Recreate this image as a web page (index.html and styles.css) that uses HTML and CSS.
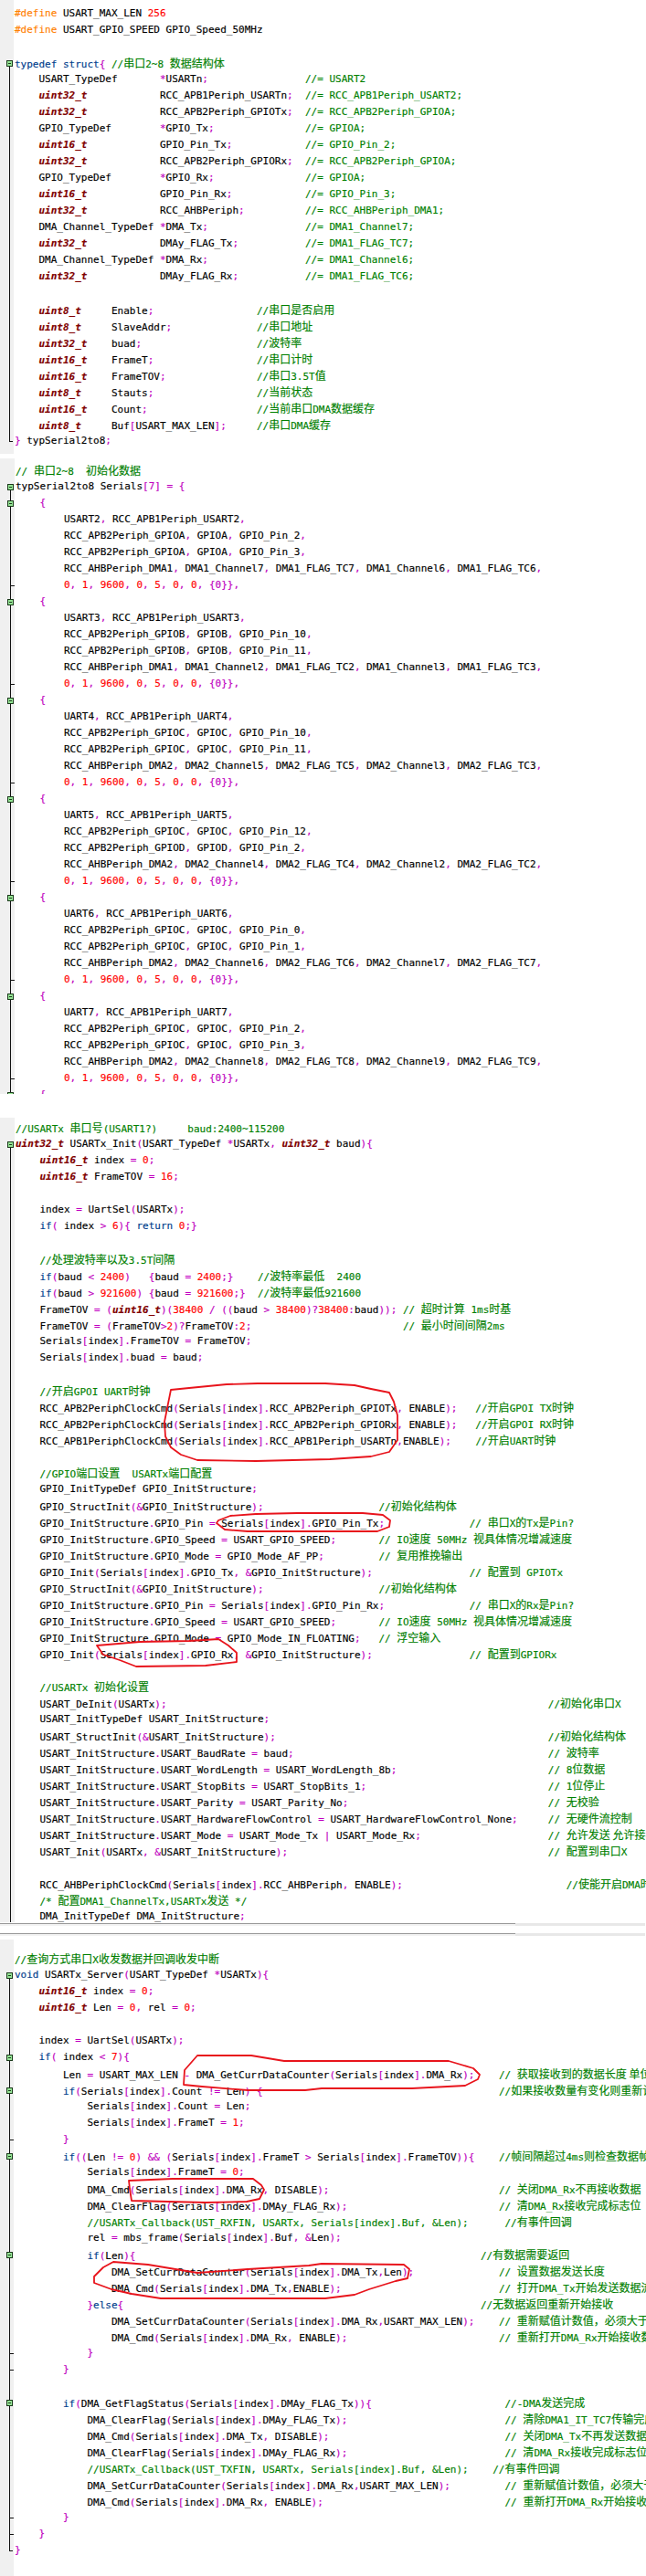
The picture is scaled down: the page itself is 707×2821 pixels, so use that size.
FILE: index.html
```html
<!DOCTYPE html>
<html lang="zh">
<head>
<meta charset="utf-8">
<title>USART DMA code</title>
<link rel="stylesheet" href="styles.css">
</head>
<body>
<main class="page">

<section class="panel one">
<div class="ln"><span class="d">#define</span> USART_MAX_LEN <span class="n">256</span></div>
<div class="ln"><span class="d">#define</span> USART_GPIO_SPEED GPIO_Speed_50MHz</div>
<div class="ln"></div>
<div class="ln m0"><span class="k">typedef struct</span><span class="p">{</span> <span class="c">//<span class="z">串口</span>2~8 <span class="z">数据结构体</span></span></div>
<div class="ln v">    USART_TypeDef       <span class="p">*</span>USARTn<span class="p">;</span>                <span class="c">//= USART2</span></div>
<div class="ln v">    <span class="t">uint32_t</span>            RCC_APB1Periph_USARTn<span class="p">;</span>  <span class="c">//= RCC_APB1Periph_USART2;</span></div>
<div class="ln v">    <span class="t">uint32_t</span>            RCC_APB2Periph_GPIOTx<span class="p">;</span>  <span class="c">//= RCC_APB2Periph_GPIOA;</span></div>
<div class="ln v">    GPIO_TypeDef        <span class="p">*</span>GPIO_Tx<span class="p">;</span>               <span class="c">//= GPIOA;</span></div>
<div class="ln v">    <span class="t">uint16_t</span>            GPIO_Pin_Tx<span class="p">;</span>            <span class="c">//= GPIO_Pin_2;</span></div>
<div class="ln v">    <span class="t">uint32_t</span>            RCC_APB2Periph_GPIORx<span class="p">;</span>  <span class="c">//= RCC_APB2Periph_GPIOA;</span></div>
<div class="ln v">    GPIO_TypeDef        <span class="p">*</span>GPIO_Rx<span class="p">;</span>               <span class="c">//= GPIOA;</span></div>
<div class="ln v">    <span class="t">uint16_t</span>            GPIO_Pin_Rx<span class="p">;</span>            <span class="c">//= GPIO_Pin_3;</span></div>
<div class="ln v">    <span class="t">uint32_t</span>            RCC_AHBPeriph<span class="p">;</span>          <span class="c">//= RCC_AHBPeriph_DMA1;</span></div>
<div class="ln v">    DMA_Channel_TypeDef <span class="p">*</span>DMA_Tx<span class="p">;</span>                <span class="c">//= DMA1_Channel7;</span></div>
<div class="ln v">    <span class="t">uint32_t</span>            DMAy_FLAG_Tx<span class="p">;</span>           <span class="c">//= DMA1_FLAG_TC7;</span></div>
<div class="ln v">    DMA_Channel_TypeDef <span class="p">*</span>DMA_Rx<span class="p">;</span>                <span class="c">//= DMA1_Channel6;</span></div>
<div class="ln v">    <span class="t">uint32_t</span>            DMAy_FLAG_Rx<span class="p">;</span>           <span class="c">//= DMA1_FLAG_TC6;</span></div>
<div class="ln v"></div>
<div class="ln v">    <span class="t">uint8_t</span>     Enable<span class="p">;</span>                 <span class="c">//<span class="z">串口是否启用</span></span></div>
<div class="ln v">    <span class="t">uint8_t</span>     SlaveAddr<span class="p">;</span>              <span class="c">//<span class="z">串口地址</span></span></div>
<div class="ln v">    <span class="t">uint32_t</span>    buad<span class="p">;</span>                   <span class="c">//<span class="z">波特率</span></span></div>
<div class="ln v">    <span class="t">uint16_t</span>    FrameT<span class="p">;</span>                 <span class="c">//<span class="z">串口计时</span></span></div>
<div class="ln v">    <span class="t">uint16_t</span>    FrameTOV<span class="p">;</span>               <span class="c">//<span class="z">串口</span>3.5T<span class="z">值</span></span></div>
<div class="ln v">    <span class="t">uint8_t</span>     Stauts<span class="p">;</span>                 <span class="c">//<span class="z">当前状态</span></span></div>
<div class="ln v">    <span class="t">uint16_t</span>    Count<span class="p">;</span>                  <span class="c">//<span class="z">当前串口</span>DMA<span class="z">数据缓存</span></span></div>
<div class="ln v">    <span class="t">uint8_t</span>     Buf<span class="p">[</span>USART_MAX_LEN<span class="p">];</span>     <span class="c">//<span class="z">串口</span>DMA<span class="z">缓存</span></span></div>
<div class="ln e"><span class="p">}</span> typSerial2to8<span class="p">;</span></div>
</section>

<section class="panel two">
<div class="ln"><span class="c">// <span class="z">串口</span>2~8  <span class="z">初始化数据</span></span></div>
<div class="ln m0">typSerial2to8 Serials<span class="p">[7]</span> <span class="p">=</span> <span class="p">{</span></div>
<div class="ln m">    <span class="p">{</span></div>
<div class="ln v">        USART2<span class="p">,</span> RCC_APB1Periph_USART2<span class="p">,</span></div>
<div class="ln v">        RCC_APB2Periph_GPIOA<span class="p">,</span> GPIOA<span class="p">,</span> GPIO_Pin_2<span class="p">,</span></div>
<div class="ln v">        RCC_APB2Periph_GPIOA<span class="p">,</span> GPIOA<span class="p">,</span> GPIO_Pin_3<span class="p">,</span></div>
<div class="ln v">        RCC_AHBPeriph_DMA1<span class="p">,</span> DMA1_Channel7<span class="p">,</span> DMA1_FLAG_TC7<span class="p">,</span> DMA1_Channel6<span class="p">,</span> DMA1_FLAG_TC6<span class="p">,</span></div>
<div class="ln x">        <span class="n">0</span><span class="p">,</span> <span class="n">1</span><span class="p">,</span> <span class="n">9600</span><span class="p">,</span> <span class="n">0</span><span class="p">,</span> <span class="n">5</span><span class="p">,</span> <span class="n">0</span><span class="p">,</span> <span class="n">0</span><span class="p">,</span> <span class="p">{0}},</span></div>
<div class="ln m">    <span class="p">{</span></div>
<div class="ln v">        USART3<span class="p">,</span> RCC_APB1Periph_USART3<span class="p">,</span></div>
<div class="ln v">        RCC_APB2Periph_GPIOB<span class="p">,</span> GPIOB<span class="p">,</span> GPIO_Pin_10<span class="p">,</span></div>
<div class="ln v">        RCC_APB2Periph_GPIOB<span class="p">,</span> GPIOB<span class="p">,</span> GPIO_Pin_11<span class="p">,</span></div>
<div class="ln v">        RCC_AHBPeriph_DMA1<span class="p">,</span> DMA1_Channel2<span class="p">,</span> DMA1_FLAG_TC2<span class="p">,</span> DMA1_Channel3<span class="p">,</span> DMA1_FLAG_TC3<span class="p">,</span></div>
<div class="ln x">        <span class="n">0</span><span class="p">,</span> <span class="n">1</span><span class="p">,</span> <span class="n">9600</span><span class="p">,</span> <span class="n">0</span><span class="p">,</span> <span class="n">5</span><span class="p">,</span> <span class="n">0</span><span class="p">,</span> <span class="n">0</span><span class="p">,</span> <span class="p">{0}},</span></div>
<div class="ln m">    <span class="p">{</span></div>
<div class="ln v">        UART4<span class="p">,</span> RCC_APB1Periph_UART4<span class="p">,</span></div>
<div class="ln v">        RCC_APB2Periph_GPIOC<span class="p">,</span> GPIOC<span class="p">,</span> GPIO_Pin_10<span class="p">,</span></div>
<div class="ln v">        RCC_APB2Periph_GPIOC<span class="p">,</span> GPIOC<span class="p">,</span> GPIO_Pin_11<span class="p">,</span></div>
<div class="ln v">        RCC_AHBPeriph_DMA2<span class="p">,</span> DMA2_Channel5<span class="p">,</span> DMA2_FLAG_TC5<span class="p">,</span> DMA2_Channel3<span class="p">,</span> DMA2_FLAG_TC3<span class="p">,</span></div>
<div class="ln x">        <span class="n">0</span><span class="p">,</span> <span class="n">1</span><span class="p">,</span> <span class="n">9600</span><span class="p">,</span> <span class="n">0</span><span class="p">,</span> <span class="n">5</span><span class="p">,</span> <span class="n">0</span><span class="p">,</span> <span class="n">0</span><span class="p">,</span> <span class="p">{0}},</span></div>
<div class="ln m">    <span class="p">{</span></div>
<div class="ln v">        UART5<span class="p">,</span> RCC_APB1Periph_UART5<span class="p">,</span></div>
<div class="ln v">        RCC_APB2Periph_GPIOC<span class="p">,</span> GPIOC<span class="p">,</span> GPIO_Pin_12<span class="p">,</span></div>
<div class="ln v">        RCC_APB2Periph_GPIOD<span class="p">,</span> GPIOD<span class="p">,</span> GPIO_Pin_2<span class="p">,</span></div>
<div class="ln v">        RCC_AHBPeriph_DMA2<span class="p">,</span> DMA2_Channel4<span class="p">,</span> DMA2_FLAG_TC4<span class="p">,</span> DMA2_Channel2<span class="p">,</span> DMA2_FLAG_TC2<span class="p">,</span></div>
<div class="ln x">        <span class="n">0</span><span class="p">,</span> <span class="n">1</span><span class="p">,</span> <span class="n">9600</span><span class="p">,</span> <span class="n">0</span><span class="p">,</span> <span class="n">5</span><span class="p">,</span> <span class="n">0</span><span class="p">,</span> <span class="n">0</span><span class="p">,</span> <span class="p">{0}},</span></div>
<div class="ln m">    <span class="p">{</span></div>
<div class="ln v">        UART6<span class="p">,</span> RCC_APB1Periph_UART6<span class="p">,</span></div>
<div class="ln v">        RCC_APB2Periph_GPIOC<span class="p">,</span> GPIOC<span class="p">,</span> GPIO_Pin_0<span class="p">,</span></div>
<div class="ln v">        RCC_APB2Periph_GPIOC<span class="p">,</span> GPIOC<span class="p">,</span> GPIO_Pin_1<span class="p">,</span></div>
<div class="ln v">        RCC_AHBPeriph_DMA2<span class="p">,</span> DMA2_Channel6<span class="p">,</span> DMA2_FLAG_TC6<span class="p">,</span> DMA2_Channel7<span class="p">,</span> DMA2_FLAG_TC7<span class="p">,</span></div>
<div class="ln x">        <span class="n">0</span><span class="p">,</span> <span class="n">1</span><span class="p">,</span> <span class="n">9600</span><span class="p">,</span> <span class="n">0</span><span class="p">,</span> <span class="n">5</span><span class="p">,</span> <span class="n">0</span><span class="p">,</span> <span class="n">0</span><span class="p">,</span> <span class="p">{0}},</span></div>
<div class="ln m">    <span class="p">{</span></div>
<div class="ln v">        UART7<span class="p">,</span> RCC_APB1Periph_UART7<span class="p">,</span></div>
<div class="ln v">        RCC_APB2Periph_GPIOC<span class="p">,</span> GPIOC<span class="p">,</span> GPIO_Pin_2<span class="p">,</span></div>
<div class="ln v">        RCC_APB2Periph_GPIOC<span class="p">,</span> GPIOC<span class="p">,</span> GPIO_Pin_3<span class="p">,</span></div>
<div class="ln v">        RCC_AHBPeriph_DMA2<span class="p">,</span> DMA2_Channel8<span class="p">,</span> DMA2_FLAG_TC8<span class="p">,</span> DMA2_Channel9<span class="p">,</span> DMA2_FLAG_TC9<span class="p">,</span></div>
<div class="ln x">        <span class="n">0</span><span class="p">,</span> <span class="n">1</span><span class="p">,</span> <span class="n">9600</span><span class="p">,</span> <span class="n">0</span><span class="p">,</span> <span class="n">5</span><span class="p">,</span> <span class="n">0</span><span class="p">,</span> <span class="n">0</span><span class="p">,</span> <span class="p">{0}},</span></div>
<div class="ln m">    <span class="p">{</span></div>
</section>

<section class="panel three">
<div class="ln"><span class="c">//USARTx <span class="z">串口号</span>(USART1?)     baud:2400~115200</span></div>
<div class="ln m0"><span class="t">uint32_t</span> USARTx_Init<span class="p">(</span>USART_TypeDef <span class="p">*</span>USARTx<span class="p">,</span> <span class="t">uint32_t</span> baud<span class="p">){</span></div>
<div class="ln v">    <span class="t">uint16_t</span> index <span class="p">=</span> <span class="n">0</span><span class="p">;</span></div>
<div class="ln v">    <span class="t">uint16_t</span> FrameTOV <span class="p">=</span> <span class="n">16</span><span class="p">;</span></div>
<div class="ln v"></div>
<div class="ln v">    index <span class="p">=</span> UartSel<span class="p">(</span>USARTx<span class="p">);</span></div>
<div class="ln v">    <span class="k">if</span><span class="p">(</span> index <span class="p">&gt;</span> <span class="n">6</span><span class="p">){</span> <span class="k">return</span> <span class="n">0</span><span class="p">;}</span></div>
<div class="ln v"></div>
<div class="ln v">    <span class="c">//<span class="z">处理波特率以及</span>3.5T<span class="z">间隔</span></span></div>
<div class="ln v">    <span class="k">if</span><span class="p">(</span>baud <span class="p">&lt;</span> <span class="n">2400</span><span class="p">)</span>   <span class="p">{</span>baud <span class="p">=</span> <span class="n">2400</span><span class="p">;}</span>    <span class="c">//<span class="z">波特率最低</span>  2400</span></div>
<div class="ln v">    <span class="k">if</span><span class="p">(</span>baud <span class="p">&gt;</span> <span class="n">921600</span><span class="p">)</span> <span class="p">{</span>baud <span class="p">=</span> <span class="n">921600</span><span class="p">;}</span>  <span class="c">//<span class="z">波特率最低</span>921600</span></div>
<div class="ln v">    FrameTOV <span class="p">=</span> <span class="p">(</span><span class="t">uint16_t</span><span class="p">)(</span><span class="n">38400</span> <span class="p">/</span> <span class="p">((</span>baud <span class="p">&gt;</span> <span class="n">38400</span><span class="p">)?</span><span class="n">38400</span><span class="p">:</span>baud<span class="p">));</span> <span class="c">// <span class="z">超时计算</span> 1ms<span class="z">时基</span></span></div>
<div class="ln v">    FrameTOV <span class="p">=</span> <span class="p">(</span>FrameTOV<span class="p">&gt;</span><span class="n">2</span><span class="p">)?</span>FrameTOV<span class="p">:</span><span class="n">2</span><span class="p">;</span>                         <span class="c">// <span class="z">最小时间间隔</span>2ms</span></div>
<div class="ln v">    Serials<span class="p">[</span>index<span class="p">].</span>FrameTOV <span class="p">=</span> FrameTOV<span class="p">;</span></div>
<div class="ln v">    Serials<span class="p">[</span>index<span class="p">].</span>buad <span class="p">=</span> baud<span class="p">;</span></div>
<div class="ln v"></div>
<div class="ln v">    <span class="c">//<span class="z">开启</span>GPOI UART<span class="z">时钟</span></span></div>
<div class="ln v">    RCC_APB2PeriphClockCmd<span class="p">(</span>Serials<span class="p">[</span>index<span class="p">].</span>RCC_APB2Periph_GPIOTx<span class="p">,</span> ENABLE<span class="p">);</span>   <span class="c">//<span class="z">开启</span>GPOI TX<span class="z">时钟</span></span></div>
<div class="ln v">    RCC_APB2PeriphClockCmd<span class="p">(</span>Serials<span class="p">[</span>index<span class="p">].</span>RCC_APB2Periph_GPIORx<span class="p">,</span> ENABLE<span class="p">);</span>   <span class="c">//<span class="z">开启</span>GPOI RX<span class="z">时钟</span></span></div>
<div class="ln v">    RCC_APB1PeriphClockCmd<span class="p">(</span>Serials<span class="p">[</span>index<span class="p">].</span>RCC_APB1Periph_USARTn<span class="p">,</span>ENABLE<span class="p">);</span>    <span class="c">//<span class="z">开启</span>UART<span class="z">时钟</span></span></div>
<div class="ln v"></div>
<div class="ln v">    <span class="c">//GPIO<span class="z">端口设置</span>  USARTx<span class="z">端口配置</span></span></div>
<div class="ln v">    GPIO_InitTypeDef GPIO_InitStructure<span class="p">;</span></div>
<div class="ln v">    GPIO_StructInit<span class="p">(&amp;</span>GPIO_InitStructure<span class="p">);</span>                   <span class="c">//<span class="z">初始化结构体</span></span></div>
<div class="ln v">    GPIO_InitStructure<span class="p">.</span>GPIO_Pin <span class="p">=</span> Serials<span class="p">[</span>index<span class="p">].</span>GPIO_Pin_Tx<span class="p">;</span>              <span class="c">// <span class="z">串口</span>X<span class="z">的</span>Tx<span class="z">是</span>Pin?</span></div>
<div class="ln v">    GPIO_InitStructure<span class="p">.</span>GPIO_Speed <span class="p">=</span> USART_GPIO_SPEED<span class="p">;</span>       <span class="c">// IO<span class="z">速度</span> 50MHz <span class="z">视具体情况增减速度</span></span></div>
<div class="ln v">    GPIO_InitStructure<span class="p">.</span>GPIO_Mode <span class="p">=</span> GPIO_Mode_AF_PP<span class="p">;</span>         <span class="c">// <span class="z">复用推挽输出</span></span></div>
<div class="ln v">    GPIO_Init<span class="p">(</span>Serials<span class="p">[</span>index<span class="p">].</span>GPIO_Tx<span class="p">,</span> <span class="p">&amp;</span>GPIO_InitStructure<span class="p">);</span>                <span class="c">// <span class="z">配置到</span> GPIOTx</span></div>
<div class="ln v">    GPIO_StructInit<span class="p">(&amp;</span>GPIO_InitStructure<span class="p">);</span>                   <span class="c">//<span class="z">初始化结构体</span></span></div>
<div class="ln v">    GPIO_InitStructure<span class="p">.</span>GPIO_Pin <span class="p">=</span> Serials<span class="p">[</span>index<span class="p">].</span>GPIO_Pin_Rx<span class="p">;</span>              <span class="c">// <span class="z">串口</span>X<span class="z">的</span>Rx<span class="z">是</span>Pin?</span></div>
<div class="ln v">    GPIO_InitStructure<span class="p">.</span>GPIO_Speed <span class="p">=</span> USART_GPIO_SPEED<span class="p">;</span>       <span class="c">// IO<span class="z">速度</span> 50MHz <span class="z">视具体情况增减速度</span></span></div>
<div class="ln v">    GPIO_InitStructure<span class="p">.</span>GPIO_Mode <span class="p">=</span> GPIO_Mode_IN_FLOATING<span class="p">;</span>   <span class="c">// <span class="z">浮空输入</span></span></div>
<div class="ln v">    GPIO_Init<span class="p">(</span>Serials<span class="p">[</span>index<span class="p">].</span>GPIO_Rx<span class="p">,</span> <span class="p">&amp;</span>GPIO_InitStructure<span class="p">);</span>                <span class="c">// <span class="z">配置到</span>GPIORx</span></div>
<div class="ln v"></div>
<div class="ln v">    <span class="c">//USARTx <span class="z">初始化设置</span></span></div>
<div class="ln v">    USART_DeInit<span class="p">(</span>USARTx<span class="p">);</span>                                                               <span class="c">//<span class="z">初始化串口</span>X</span></div>
<div class="ln v">    USART_InitTypeDef USART_InitStructure<span class="p">;</span></div>
<div class="ln v">    USART_StructInit<span class="p">(&amp;</span>USART_InitStructure<span class="p">);</span>                                             <span class="c">//<span class="z">初始化结构体</span></span></div>
<div class="ln v">    USART_InitStructure<span class="p">.</span>USART_BaudRate <span class="p">=</span> baud<span class="p">;</span>                                          <span class="c">// <span class="z">波特率</span></span></div>
<div class="ln v">    USART_InitStructure<span class="p">.</span>USART_WordLength <span class="p">=</span> USART_WordLength_8b<span class="p">;</span>                         <span class="c">// 8<span class="z">位数据</span></span></div>
<div class="ln v">    USART_InitStructure<span class="p">.</span>USART_StopBits <span class="p">=</span> USART_StopBits_1<span class="p">;</span>                              <span class="c">// 1<span class="z">位停止</span></span></div>
<div class="ln v">    USART_InitStructure<span class="p">.</span>USART_Parity <span class="p">=</span> USART_Parity_No<span class="p">;</span>                                 <span class="c">// <span class="z">无校验</span></span></div>
<div class="ln v">    USART_InitStructure<span class="p">.</span>USART_HardwareFlowControl <span class="p">=</span> USART_HardwareFlowControl_None<span class="p">;</span>     <span class="c">// <span class="z">无硬件流控制</span></span></div>
<div class="ln v">    USART_InitStructure<span class="p">.</span>USART_Mode <span class="p">=</span> USART_Mode_Tx <span class="p">|</span> USART_Mode_Rx<span class="p">;</span>                     <span class="c">// <span class="z">允许发送 允许接收</span></span></div>
<div class="ln v">    USART_Init<span class="p">(</span>USARTx<span class="p">,</span> <span class="p">&amp;</span>USART_InitStructure<span class="p">);</span>                                           <span class="c">// <span class="z">配置到串口</span>X</span></div>
<div class="ln v"></div>
<div class="ln v">    RCC_AHBPeriphClockCmd<span class="p">(</span>Serials<span class="p">[</span>index<span class="p">].</span>RCC_AHBPeriph<span class="p">,</span> ENABLE<span class="p">);</span>                           <span class="c">//<span class="z">使能开启</span>DMA<span class="z">时钟</span></span></div>
<div class="ln v">    <span class="c">/* <span class="z">配置</span>DMA1_ChannelTx,USARTx<span class="z">发送</span> */</span></div>
<div class="ln v">    DMA_InitTypeDef DMA_InitStructure<span class="p">;</span></div>
</section>

<div class="sep first"><span class="sep-dark"></span><span class="sep-light"></span></div>
<div class="sep second"><span class="sep-dark"></span><span class="sep-light"></span></div>

<section class="panel four">
<div class="ln"><span class="c">//<span class="z">查询方式串口</span>X<span class="z">收发数据并回调收发中断</span></span></div>
<div class="ln m0"><span class="k">void</span> USARTx_Server<span class="p">(</span>USART_TypeDef <span class="p">*</span>USARTx<span class="p">){</span></div>
<div class="ln v">    <span class="t">uint16_t</span> index <span class="p">=</span> <span class="n">0</span><span class="p">;</span></div>
<div class="ln v">    <span class="t">uint16_t</span> Len <span class="p">=</span> <span class="n">0</span><span class="p">,</span> rel <span class="p">=</span> <span class="n">0</span><span class="p">;</span></div>
<div class="ln v"></div>
<div class="ln v">    index <span class="p">=</span> UartSel<span class="p">(</span>USARTx<span class="p">);</span></div>
<div class="ln m">    <span class="k">if</span><span class="p">(</span> index <span class="p">&lt;</span> <span class="n">7</span><span class="p">){</span></div>
<div class="ln v">        Len <span class="p">=</span> USART_MAX_LEN <span class="p">-</span> DMA_GetCurrDataCounter<span class="p">(</span>Serials<span class="p">[</span>index<span class="p">].</span>DMA_Rx<span class="p">);</span>    <span class="c">// <span class="z">获取接收到的数据长度 单位为字节</span></span></div>
<div class="ln m">        <span class="k">if</span><span class="p">(</span>Serials<span class="p">[</span>index<span class="p">].</span>Count <span class="p">!=</span> Len<span class="p">)</span> <span class="p">{</span>                                       <span class="c">//<span class="z">如果接收数量有变化则重新计时</span></span></div>
<div class="ln v">            Serials<span class="p">[</span>index<span class="p">].</span>Count <span class="p">=</span> Len<span class="p">;</span></div>
<div class="ln v">            Serials<span class="p">[</span>index<span class="p">].</span>FrameT <span class="p">=</span> <span class="n">1</span><span class="p">;</span></div>
<div class="ln x">        <span class="p">}</span></div>
<div class="ln m">        <span class="k">if</span><span class="p">((</span>Len <span class="p">!=</span> <span class="n">0</span><span class="p">)</span> <span class="p">&amp;&amp;</span> <span class="p">(</span>Serials<span class="p">[</span>index<span class="p">].</span>FrameT <span class="p">&gt;</span> Serials<span class="p">[</span>index<span class="p">].</span>FrameTOV<span class="p">)){</span>    <span class="c">//<span class="z">帧间隔超过</span>4ms<span class="z">则检查数据帧</span></span></div>
<div class="ln v">            Serials<span class="p">[</span>index<span class="p">].</span>FrameT <span class="p">=</span> <span class="n">0</span><span class="p">;</span></div>
<div class="ln v">            DMA_Cmd<span class="p">(</span>Serials<span class="p">[</span>index<span class="p">].</span>DMA_Rx<span class="p">,</span> DISABLE<span class="p">);</span>                            <span class="c">// <span class="z">关闭</span>DMA_Rx<span class="z">不再接收数据</span></span></div>
<div class="ln v">            DMA_ClearFlag<span class="p">(</span>Serials<span class="p">[</span>index<span class="p">].</span>DMAy_FLAG_Rx<span class="p">);</span>                         <span class="c">// <span class="z">清</span>DMA_Rx<span class="z">接收完成标志位</span></span></div>
<div class="ln v">            <span class="c">//USARTx_Callback(UST_RXFIN, USARTx, Serials[index].Buf, &amp;Len);      //<span class="z">有事件回调</span></span></div>
<div class="ln v">            rel <span class="p">=</span> mbs_frame<span class="p">(</span>Serials<span class="p">[</span>index<span class="p">].</span>Buf<span class="p">,</span> <span class="p">&amp;</span>Len<span class="p">);</span></div>
<div class="ln m">            <span class="k">if</span><span class="p">(</span>Len<span class="p">){</span>                                                         <span class="c">//<span class="z">有数据需要返回</span></span></div>
<div class="ln v">                DMA_SetCurrDataCounter<span class="p">(</span>Serials<span class="p">[</span>index<span class="p">].</span>DMA_Tx<span class="p">,</span>Len<span class="p">);</span>              <span class="c">// <span class="z">设置数据发送长度</span></span></div>
<div class="ln v">                DMA_Cmd<span class="p">(</span>Serials<span class="p">[</span>index<span class="p">].</span>DMA_Tx<span class="p">,</span>ENABLE<span class="p">);</span>                          <span class="c">// <span class="z">打开</span>DMA_Tx<span class="z">开始发送数据流</span></span></div>
<div class="ln v">            <span class="p">}</span><span class="k">else</span><span class="p">{</span>                                                           <span class="c">//<span class="z">无数据返回重新开始接收</span></span></div>
<div class="ln v">                DMA_SetCurrDataCounter<span class="p">(</span>Serials<span class="p">[</span>index<span class="p">].</span>DMA_Rx<span class="p">,</span>USART_MAX_LEN<span class="p">);</span>    <span class="c">// <span class="z">重新赋值计数值，必须大于</span></span></div>
<div class="ln v">                DMA_Cmd<span class="p">(</span>Serials<span class="p">[</span>index<span class="p">].</span>DMA_Rx<span class="p">,</span> ENABLE<span class="p">);</span>                         <span class="c">// <span class="z">重新打开</span>DMA_Rx<span class="z">开始接收数据</span></span></div>
<div class="ln x">            <span class="p">}</span></div>
<div class="ln x">        <span class="p">}</span></div>
<div class="ln v"></div>
<div class="ln m">        <span class="k">if</span><span class="p">(</span>DMA_GetFlagStatus<span class="p">(</span>Serials<span class="p">[</span>index<span class="p">].</span>DMAy_FLAG_Tx<span class="p">)){</span>                      <span class="c">//-DMA<span class="z">发送完成</span></span></div>
<div class="ln v">            DMA_ClearFlag<span class="p">(</span>Serials<span class="p">[</span>index<span class="p">].</span>DMAy_FLAG_Tx<span class="p">);</span>                          <span class="c">// <span class="z">清除</span>DMA1_IT_TC7<span class="z">传输完成标志位</span></span></div>
<div class="ln v">            DMA_Cmd<span class="p">(</span>Serials<span class="p">[</span>index<span class="p">].</span>DMA_Tx<span class="p">,</span> DISABLE<span class="p">);</span>                             <span class="c">// <span class="z">关闭</span>DMA_Tx<span class="z">不再发送数据</span></span></div>
<div class="ln v">            DMA_ClearFlag<span class="p">(</span>Serials<span class="p">[</span>index<span class="p">].</span>DMAy_FLAG_Rx<span class="p">);</span>                          <span class="c">// <span class="z">清</span>DMA_Rx<span class="z">接收完成标志位</span></span></div>
<div class="ln v">            <span class="c">//USARTx_Callback(UST_TXFIN, USARTx, Serials[index].Buf, &amp;Len);    //<span class="z">有事件回调</span></span></div>
<div class="ln v">            DMA_SetCurrDataCounter<span class="p">(</span>Serials<span class="p">[</span>index<span class="p">].</span>DMA_Rx<span class="p">,</span>USART_MAX_LEN<span class="p">);</span>         <span class="c">// <span class="z">重新赋值计数值，必须大于</span></span></div>
<div class="ln v">            DMA_Cmd<span class="p">(</span>Serials<span class="p">[</span>index<span class="p">].</span>DMA_Rx<span class="p">,</span> ENABLE<span class="p">);</span>                              <span class="c">// <span class="z">重新打开</span>DMA_Rx<span class="z">开始接收数据</span></span></div>
<div class="ln x">        <span class="p">}</span></div>
<div class="ln x">    <span class="p">}</span></div>
<div class="ln e"><span class="p">}</span></div>
</section>

<svg class="ink" viewBox="0 0 707 2821" aria-hidden="true">
<path d="M187 1522 207 1520 248 1516 282 1515 356 1515 388 1517 406 1521 426 1525 431 1535 435 1550 435 1577 426 1590 406 1595 361 1598 280 1600 216 1599 198 1593 187 1585 181 1573 180 1557 184 1537Z"/>
<path d="M237 1668 239 1665 252 1660 280 1658 325 1657 397 1657 419 1659 427 1665 426 1672 413 1677 316 1677 271 1677 246 1675Z"/>
<path d="M106 1802 153 1798 207 1797 239 1795 250 1802 259 1810 259 1820 225 1824 149 1825 131 1818 113 1812Z"/>
<path d="M216 2251 275 2251 311 2257 491 2257 518 2265 525 2272 523 2277 509 2284 451 2287 352 2287 334 2289 271 2289 221 2285 201 2283 202 2267Z"/>
<path d="M141 2388 189 2386 277 2386 286 2393 289 2398 284 2408 270 2411 225 2412 144 2410 142 2397Z"/>
<path d="M124 2477 162 2480 180 2483 216 2489 271 2485 338 2481 352 2479 442 2480 448 2485 446 2495 433 2498 404 2507 388 2513 356 2517 176 2517 144 2512 122 2507 103 2500 103 2493 113 2483Z"/>
</svg>

</main>
</body>
</html>
```

FILE: styles.css
```css
html, body {
  margin: 0;
  padding: 0;
  background: #fff;
}

.page {
  position: relative;
  width: 707px;
  height: 2821px;
  overflow: hidden;
  font-family: "DejaVu Sans Mono", "Noto Sans CJK SC", monospace;
  font-size: 11px;
  line-height: 18px;
  color: #000;
  -webkit-text-stroke: 0.15px currentColor;
}

.panel {
  --g: 15px;
  --mx: 7px;
  --ink: #111;
  overflow: hidden;
  background: linear-gradient(90deg, #f0f0f0 var(--g), #fff var(--g));
}

.one { height: 491px; padding-top: 6px; }
.two { --g: 16px; --mx: 8px; height: 692px; margin-top: 5px; padding-top: 4px; }
.three { --g: 16px; --mx: 8px; height: 879px; margin-top: 26px; padding-top: 2px; }
.four { height: 686px; margin-top: 4px; padding-top: 12px; }

.ln {
  height: 18px;
  white-space: pre;
}

.ln::before {
  content: "";
  display: inline-block;
  width: var(--g);
  height: 18px;
  margin-right: 1px;
  vertical-align: top;
  background-repeat: no-repeat;
}

.v::before {
  background-image: linear-gradient(var(--ink), var(--ink));
  background-position: calc(var(--mx) + 3px) 0;
  background-size: 1px 100%;
}

.x::before {
  background-image: linear-gradient(var(--ink), var(--ink)), linear-gradient(var(--ink), var(--ink));
  background-position: calc(var(--mx) + 3px) 9px, calc(var(--mx) + 3px) 0;
  background-size: 5px 1px, 1px 100%;
}

.e::before {
  background-image: linear-gradient(var(--ink), var(--ink)), linear-gradient(var(--ink), var(--ink));
  background-position: calc(var(--mx) + 3px) 9px, calc(var(--mx) + 3px) 0;
  background-size: 4px 1px, 1px 10px;
}

.m::before,
.m0::before {
  background-image:
    linear-gradient(#1c3a1c, #1c3a1c),
    linear-gradient(#96e696, #96e696),
    linear-gradient(#1c3a1c, #1c3a1c),
    linear-gradient(var(--ink), var(--ink));
  background-position:
    calc(var(--mx) + 2px) 9px,
    calc(var(--mx) + 1px) 7px,
    var(--mx) 6px,
    calc(var(--mx) + 3px) 0;
  background-size: 3px 1px, 5px 5px, 7px 7px, 1px 100%;
}

.m0::before {
  background-position:
    calc(var(--mx) + 2px) 9px,
    calc(var(--mx) + 1px) 7px,
    var(--mx) 6px,
    calc(var(--mx) + 3px) 12px;
}

.c, .c .z { color: #008000; }
.d { color: #ff8000; }
.k { color: #00408c; }
.n { color: #ff0000; }
.p { color: #c000c0; }
.t { color: #800000; font-weight: bold; font-style: italic; }
.z { font-size: 12px; font-family: "Noto Sans CJK SC", sans-serif; }

.sep {
  display: flex;
  width: 706px;
  height: 3px;
}

.first { margin-top: 1px; }
.second { margin-top: 8px; }

.sep-dark {
  width: 564px;
  border-top: 1px solid #9a9a9a;
  background: #f2f2f2;
}

.sep-light {
  flex: 1;
  background: #e8e8e8;
}

.ink {
  position: absolute;
  inset: 0;
  width: 707px;
  height: 2821px;
  pointer-events: none;
}

.ink path {
  fill: none;
  stroke: #e8141c;
  stroke-width: 1.8;
  stroke-linejoin: round;
}
```
